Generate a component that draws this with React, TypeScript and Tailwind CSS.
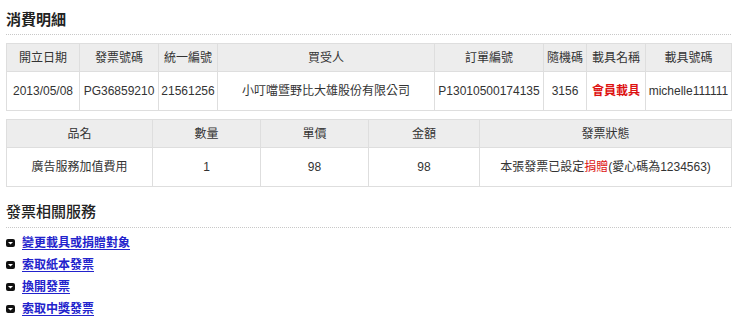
const font = "font-['Liberation_Sans','Noto_Sans_CJK_TC',sans-serif]";

const head1 = [
  { label: "開立日期", w: "w-[73px]" },
  { label: "發票號碼", w: "w-[79px]" },
  { label: "統一編號", w: "w-[59px]" },
  { label: "買受人", w: "w-[217px]" },
  { label: "訂單編號", w: "w-[109px]" },
  { label: "隨機碼", w: "w-[43px]" },
  { label: "載具名稱", w: "w-[59px]" },
  { label: "載具號碼", w: "w-[86px]" },
];

const head2 = [
  { label: "品名", w: "w-[146px]" },
  { label: "數量", w: "w-[108px]" },
  { label: "單價", w: "w-[108px]" },
  { label: "金額", w: "w-[111px]" },
  { label: "發票狀態", w: "w-[252px]" },
];

const links = ["變更載具或捐贈對象", "索取紙本發票", "換開發票", "索取中獎發票"];

const th = "border border-[#dedede] bg-[#ededed] font-normal text-center h-[28px] px-0";
const td = "border border-[#dedede] bg-white text-center h-[39px] px-0";

function Caret() {
  return (
    <svg width="9" height="8" viewBox="0 0 9 8" className="shrink-0">
      <rect x="0" y="0" width="9" height="8" rx="2" fill="#111" />
      <path d="M2 3 L7 3 L4.5 5.5 Z" fill="#fff" />
    </svg>
  );
}

export default function App() {
  return (
    <div className={`w-[737px] h-[324px] bg-white text-[#333] text-[12px] ${font} px-[6px] overflow-hidden`}>
      {/* 消費明細 */}
      <h3 className="pt-[11px] pb-[5px] text-[15px] font-bold leading-[18px] text-[#222] border-b border-dotted border-[#c8c8c8]">
        消費明細
      </h3>

      <table className="mt-[8px] w-[726px] border-collapse table-fixed">
        <thead>
          <tr>
            {head1.map((h) => (
              <th key={h.label} className={`${th} ${h.w}`}>{h.label}</th>
            ))}
          </tr>
        </thead>
        <tbody>
          <tr>
            <td className={td}>2013/05/08</td>
            <td className={td}>PG36859210</td>
            <td className={td}>21561256</td>
            <td className={td}>小叮噹暨野比大雄股份有限公司</td>
            <td className={td}>P13010500174135</td>
            <td className={td}>3156</td>
            <td className={`${td} text-[#dd1111] font-bold`}>會員載具</td>
            <td className={td}>michelle111111</td>
          </tr>
        </tbody>
      </table>

      <table className="mt-[8px] w-[726px] border-collapse table-fixed">
        <thead>
          <tr>
            {head2.map((h) => (
              <th key={h.label} className={`${th} ${h.w}`}>{h.label}</th>
            ))}
          </tr>
        </thead>
        <tbody>
          <tr>
            <td className={td}>廣告服務加值費用</td>
            <td className={td}>1</td>
            <td className={td}>98</td>
            <td className={td}>98</td>
            <td className={td}>
              本張發票已設定<span className="text-[#dd1111]">捐贈</span>(愛心碼為1234563)
            </td>
          </tr>
        </tbody>
      </table>

      {/* 發票相關服務 */}
      <h3 className="mt-[16px] pb-[6px] text-[15px] font-medium leading-[18px] text-[#222] border-b border-dotted border-[#c8c8c8]">
        發票相關服務
      </h3>

      <ul className="mt-[4px] flex flex-col">
        {links.map((l) => (
          <li key={l} className="flex items-center gap-[7px] h-[22px]">
            <Caret />
            <a href="#" className="text-[12px] font-bold text-[#2222cc] underline underline-offset-2 font-['Liberation_Serif','Noto_Sans_CJK_TC',serif]">
              {l}
            </a>
          </li>
        ))}
      </ul>
    </div>
  );
}
